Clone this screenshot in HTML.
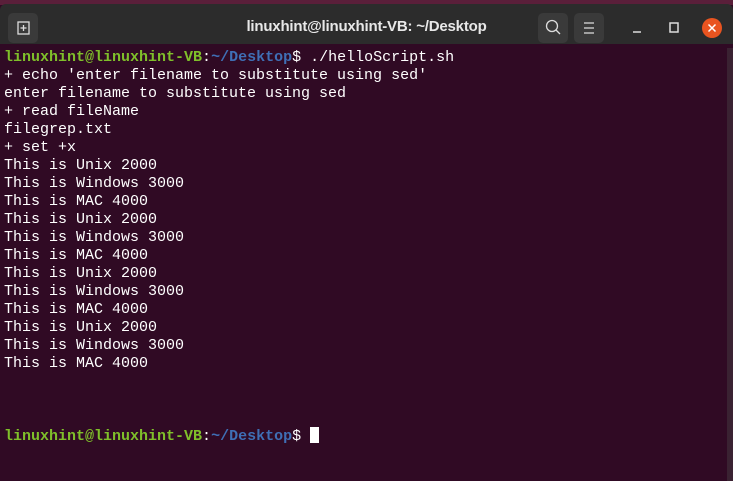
<!DOCTYPE html><html><head><style>
body{margin:0;width:733px;height:481px;overflow:hidden;background:#300a24;position:relative;font-family:"Liberation Mono",monospace}
.top{position:absolute;left:0;top:0;width:733px;height:5px;background:#5a1f3a}
.bar{position:absolute;left:0;top:4px;width:733px;height:40px;background:#2c2c2c;border-radius:6px 6px 0 0}
.title{position:absolute;left:0;width:733px;top:14px;text-align:center;color:#e8e8e8;font:bold 15px "Liberation Sans",sans-serif;letter-spacing:-0.2px}
.btn{position:absolute;top:9px;width:30px;height:30px;background:#3a3a3a;border-radius:5px}
.term{position:absolute;left:4px;top:49px;color:#fff;font-size:15px;line-height:18px;white-space:pre}
.g{font-weight:bold;color:#7fbf2a}.b{color:#3f6fb5;font-weight:bold}
.cur{display:inline-block;width:9px;height:16px;background:#fff;vertical-align:-3px}
.sb{position:absolute;right:0;top:48px;width:6px;height:433px;background:#3a2232}
</style></head><body>
<div class="top"></div>
<div class="bar">
<div class="btn" style="left:8px"><svg width="30" height="30"><rect x="10" y="9" width="11" height="12" fill="none" stroke="#ddd" stroke-width="1.3"/><path d="M15.5 12v6M12.5 15h6" stroke="#ddd" stroke-width="1.3"/></svg></div>
<div class="title">linuxhint@linuxhint-VB: ~/Desktop</div>
<div class="btn" style="left:538px"><svg width="30" height="30"><circle cx="14" cy="13" r="5.5" fill="none" stroke="#ddd" stroke-width="1.3"/><path d="M18 17l4 4" stroke="#ddd" stroke-width="1.3"/></svg></div>
<div class="btn" style="left:574px"><svg width="30" height="30"><path d="M10 10h10M10 15h10M10 20h10" stroke="#ddd" stroke-width="1.3"/></svg></div>
<svg style="position:absolute;left:622px;top:9px" width="100" height="30"><path d="M11 19h8" stroke="#ddd" stroke-width="1.5"/><rect x="48" y="10" width="8" height="9" fill="none" stroke="#ddd" stroke-width="1.5"/><circle cx="90" cy="15" r="10" fill="#e95420"/><path d="M86.5 11.5l7 7M93.5 11.5l-7 7" stroke="#fff" stroke-width="1.5"/></svg>
</div>
<div class="sb"></div>
<div class="term"><span class="g">linuxhint@linuxhint-VB</span>:<span class="b">~/Desktop</span>$ ./helloScript.sh
+ echo 'enter filename to substitute using sed'
enter filename to substitute using sed
+ read fileName
filegrep.txt
+ set +x
This is Unix 2000
This is Windows 3000
This is MAC 4000
This is Unix 2000
This is Windows 3000
This is MAC 4000
This is Unix 2000
This is Windows 3000
This is MAC 4000
This is Unix 2000
This is Windows 3000
This is MAC 4000



<span class="g">linuxhint@linuxhint-VB</span>:<span class="b">~/Desktop</span>$ <span class="cur"></span></div>
</body></html>
